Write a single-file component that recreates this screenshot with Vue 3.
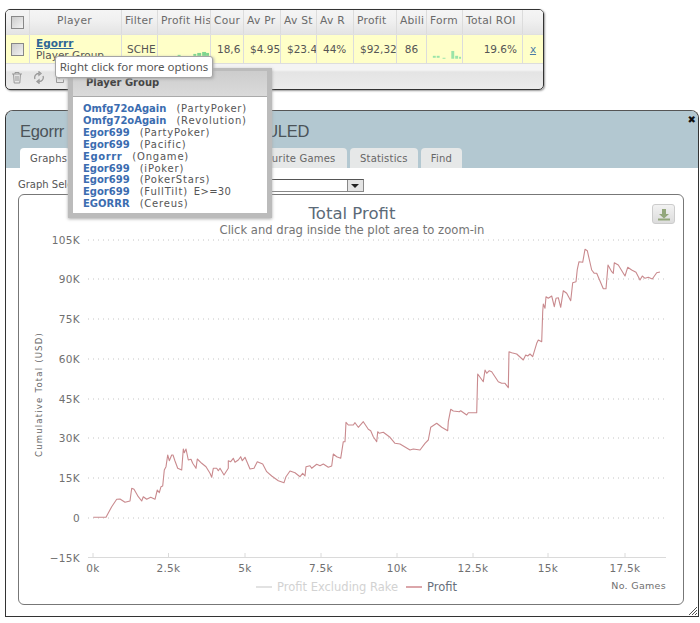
<script setup>
const columns = ['Player', 'Filter', 'Profit His', 'Cour', 'Av Pr', 'Av St', 'Av R', 'Profit', 'Abili', 'Form', 'Total ROI']
const group = [
  ['Omfg72oAgain', '(PartyPoker)', ''],
  ['Omfg72oAgain', '(Revolution)', ''],
  ['Egor699', '(PartyPoker)', ''],
  ['Egor699', '(Pacific)', ''],
  ['Egorrr', '(Ongame)', ''],
  ['Egor699', '(iPoker)', ''],
  ['Egor699', '(PokerStars)', ''],
  ['Egor699', '(FullTilt)', 'E>=30'],
  ['EGORRR', '(Cereus)', '']
]
const conv = (pts, ox, oy) => pts.map(([x, y]) => [ox + x / 3, oy + y / 3])
const a = conv([[40,352],[78,352],[95,320],[110,298],[120,297],[135,307],[150,303],[155,265],[162,268],[175,290],[185,303],[190,290],[200,298],[212,292],[225,298],[232,270],[238,278],[243,260],[248,258],[253,210],[258,200],[263,165],[268,182],[275,165],[279,165],[285,183],[293,205],[305,210],[310,147],[313,158],[318,147],[325,180],[333,178],[338,190],[348,205],[352,177],[365,190],[378,200],[390,220],[395,232],[400,205],[410,205],[415,212],[420,205],[432,225],[445,205],[445,182],[452,185],[460,175],[465,187],[475,180],[482,170],[487,182],[495,172],[505,195],[510,207],[522,205],[532,185],[548,192],[560,215],[575,228],[595,242],[612,248],[618,230],[630,213],[645,218],[660,230],[668,220],[675,228],[678,200],[690,197],[695,205],[710,193],[720,197],[730,192],[745,202],[755,198],[760,162],[770,170],[782,175],[790,125],[795,125],[798,67],[805,75],[820,75],[825,68],[835,82],[850,65],[865,88],[872,92],[880,110],[890,125],[893,95],[898,100],[910,97],[930,112],[945,130],[960,132]], 80, 400)
const b = conv([[150,330],[160,327],[180,330],[195,310],[205,300],[212,262],[230,250],[245,262],[263,272],[265,245],[272,208],[280,213],[298,215],[302,212],[320,225],[325,218],[350,218],[353,102],[370,125],[375,90],[380,100],[388,92],[395,95],[415,125],[425,130],[435,130],[445,143],[447,35],[455,38],[470,42],[490,60],[497,45],[503,48],[510,42],[518,50],[530,10],[535,0],[545,5]], 360, 340)
const c = conv([[428,245],[430,222],[435,235],[438,200],[445,205],[455,198],[463,230],[468,205],[475,203],[482,232],[490,182],[500,190],[512,212],[518,158],[528,155],[532,118],[537,95],[548,97],[555,58],[562,62],[575,120],[583,130],[590,130],[610,176],[618,176],[624,105],[635,125],[640,130],[643,98],[655,105],[675,138],[683,112],[695,120],[708,127],[720,150],[727,138],[735,145],[745,142],[757,147],[770,128],[780,126]], 400, 230)
const line = [...a.filter(p => p[0] <= 405), ...b.filter(p => p[0] > 405), ...c]
  .map(p => `${p[0].toFixed(1)},${p[1].toFixed(1)}`).join(' ')
const yTicks = [['105K',240],['90K',279],['75K',319],['60K',359],['45K',399],['30K',438],['15K',478],['0',518]]
const xTicks = [['0k',93],['2.5k',168.5],['5k',245],['7.5k',321],['10k',397],['12.5k',473],['15k',548],['17.5k',625]]
const formBars = [[432,55,3,2],[436,55,3,2],[442,57,3,1],[451,50,3,8],[455,55,3,3],[459,56,2,2]]
const historyBars = [[20,20,3,1],[36,19,3,2],[40,18,4,3],[45,17,4,4],[49,18,3,3]]
</script>

<template>
  <div class="page">
    <section class="grid-panel">
      <div class="row head">
        <div class="cell"><span class="check"></span></div>
        <div v-for="col in columns" :key="col" class="cell">{{ col }}</div>
        <div class="cell"></div>
      </div>
      <div class="row data">
        <div class="cell"><span class="check"></span></div>
        <div class="cell player"><a class="name">Egorrr</a><span>Player Group</span></div>
        <div class="cell">SCHE</div>
        <div class="cell spark">
          <svg width="53" height="29" viewBox="0 0 53 29"><g fill="#7ed68f"><rect v-for="(r, i) in historyBars" :key="i" :x="r[0]" :y="r[1]" :width="r[2]" :height="r[3]"/></g></svg>
        </div>
        <div class="cell left">18,6</div>
        <div class="cell left">$4.95</div>
        <div class="cell left">$23.4</div>
        <div class="cell left">44%</div>
        <div class="cell left">$92,32</div>
        <div class="cell">86</div>
        <div class="cell spark">
          <svg width="36" height="29" viewBox="426 34 36 29"><g fill="#9ae4a8"><rect v-for="(r, i) in formBars" :key="i" :x="r[0]" :y="r[1]" :width="r[2]" :height="r[3]"/></g></svg>
        </div>
        <div class="cell right">19.6%</div>
        <div class="cell"><a class="remove">x</a></div>
      </div>
      <div class="toolbar">
        <svg width="12" height="13" viewBox="0 0 12 13" fill="none" stroke="#999"><path d="M1 3h10M4 3V1.500h4V3M2.500 3l.7 9h5.600l.7-9M5 5v5M7 5v5"/></svg>
        <svg width="12" height="13" viewBox="0 0 12 13" fill="none" stroke="#999" stroke-width="1.300"><path d="M2 8A4 4 0 0 1 6 2.500M10 5A4 4 0 0 1 6 10.500M6 .8v3.400l2-1.700zM6 12.200V8.800l-2 1.700z"/></svg>
        <svg width="12" height="13" viewBox="0 0 12 13" fill="none" stroke="#999"><path d="M1.500 4.500v7h7v-3M4 8c0-3 2-4 5-4M8 2l3 2-3 2"/></svg>
      </div>
    </section>

    <section class="modal">
      <header class="modal-head">
        <h1 class="modal-title"><span>Egorrr</span><span>SCHEDULED</span></h1>
        <span class="close">✖</span>
        <nav class="tabs">
          <span class="tab active t-graphs">Graphs</span>
          <span class="tab t-other"></span>
          <span class="tab t-fav">Favourite Games</span>
          <span class="tab">Statistics</span>
          <span class="tab">Find</span>
        </nav>
      </header>
      <div class="modal-body">
        <div class="selector">
          <label>Graph Selection</label>
          <div class="select"><span class="arrow"></span></div>
        </div>
        <div class="chart-box">
          <svg class="chart" width="666" height="411" viewBox="18 194 666 411">
            <text x="352" y="219" class="title" text-anchor="middle">Total Profit</text>
            <text x="352" y="234" class="subtitle" text-anchor="middle">Click and drag inside the plot area to zoom-in</text>
            <line v-for="t in yTicks" :key="t[0]" x1="88" x2="666" :y1="t[1]" :y2="t[1]" class="gridline"/>
            <line x1="88" x2="666" y1="557.500" y2="557.500" class="axis"/>
            <line v-for="t in xTicks" :key="'m' + t[0]" :x1="t[1]" :x2="t[1]" y1="553" y2="558" class="axis"/>
            <text v-for="t in yTicks" :key="'l' + t[0]" x="80" :y="t[1] + 4" text-anchor="end" class="tick">{{ t[0] }}</text>
            <text x="80" y="562" text-anchor="end" class="tick">−15K</text>
            <text v-for="t in xTicks" :key="'x' + t[0]" :x="t[1]" y="572" text-anchor="middle" class="tick">{{ t[0] }}</text>
            <text transform="translate(42 394.500) rotate(-90)" text-anchor="middle" class="ytitle">Cumulative Total (USD)</text>
            <polyline :points="line" fill="none" stroke="#c98a8e" stroke-width="1.100" stroke-linejoin="round"/>
            <line x1="256" x2="272" y1="587" y2="587" stroke="#e2e2e2" stroke-width="2"/>
            <text x="277" y="591" class="legend off">Profit Excluding Rake</text>
            <line x1="406" x2="422" y1="587" y2="587" stroke="#dba6aa" stroke-width="2"/>
            <text x="427" y="591" class="legend">Profit</text>
            <text x="666" y="589" text-anchor="end" class="games">No. Games</text>
          </svg>
          <button class="download" type="button">
            <svg width="14" height="13" viewBox="0 0 14 13"><path d="M5 1h4v5h3L7 10.500 2 6h3z" fill="#93a77c"/><path d="M1 10.500h12V12.500H1z" fill="#93a77c"/></svg>
          </button>
        </div>
      </div>
      <svg class="grip" width="12" height="12" viewBox="0 0 12 12" stroke="#555"><path d="M11 3l-8 8M11 6l-5 5M11 9l-2 2"/></svg>
    </section>

    <div class="tooltip">Right click for more options</div>
    <aside class="popup">
      <h2 class="popup-head">Player Group</h2>
      <ul class="popup-list">
        <li v-for="(g, i) in group" :key="i">
          <b>{{ g[0] }}</b><span>{{ g[1] }}</span><span v-if="g[2]" class="extra">{{ g[2] }}</span>
        </li>
      </ul>
    </aside>
  </div>
</template>

<style scoped>
.page {
  position: relative;
  width: 700px;
  height: 623px;
  box-sizing: border-box;
  padding: 9px 0 0 5px;
  overflow: hidden;
  background: #fff;
  font-family: "DejaVu Sans", sans-serif;
  font-size: 10.500px;
  color: #555;
}
.grid-panel {
  width: 539px;
  height: 81px;
  box-sizing: border-box;
  border: 1px solid #333;
  border-radius: 5px;
  box-shadow: 1px 1px 2px #999;
  overflow: hidden;
  background: linear-gradient(#f4f4f4 0, #f4f4f4 60px, #e4e4e4 62px, #ececec 80px);
}
.row {
  display: grid;
  grid-template-columns: 24px 92px 36px 53px 33px 37px 36px 37px 43px 30px 36px 60px 20px;
}
.head {
  height: 25px;
  background: linear-gradient(#f5f5f5, #f0f0f0 45%, #e4e4e4);
  border-bottom: 1px solid #e0e0e0;
  box-sizing: border-box;
  color: #6a6a6a;
  font-size: 10.700px;
  letter-spacing: 0.250px;
}
.data {
  height: 29px;
  background: #ffffc8;
  border-bottom: 1px solid #ddd;
  box-sizing: border-box;
}
.cell {
  display: flex;
  align-items: center;
  justify-content: center;
  white-space: nowrap;
  overflow: hidden;
  border-right: 1px solid #dcdcdc;
  box-sizing: border-box;
  padding: 0 3px;
}
.cell:last-child { border-right: 0; }
.cell.left { justify-content: flex-start; }
.cell.right { justify-content: flex-end; padding-right: 5px; }
.cell.spark { padding: 0; align-items: flex-start; justify-content: flex-start; }
.head .cell { justify-content: center; padding-bottom: 4px; }
.head .cell:first-child { padding-bottom: 0; }
.head .cell:nth-child(n + 3) { justify-content: flex-start; }
.head .cell:nth-child(2) { padding-right: 5px; }
.data .cell:nth-child(3) { justify-content: flex-start; padding-left: 5px; }
.data .cell.left { padding-left: 6px; }
.check {
  width: 11px;
  height: 11px;
  flex: none;
  border: 1px solid #888;
  background: linear-gradient(135deg, #ccc, #f2f2f2);
}
.player {
  flex-direction: column;
  align-items: flex-start;
  justify-content: center;
  padding-left: 6px;
  line-height: 12px;
}
.name {
  color: #2f6796;
  font-weight: 700;
  text-decoration: underline;
}
.remove { color: #4a7ba6; text-decoration: underline; }
.toolbar {
  height: 25px;
  display: flex;
  align-items: center;
  gap: 10px;
  padding: 2px 0 0 5px;
  box-sizing: border-box;
}
.modal {
  position: relative;
  width: 694px;
  height: 507px;
  margin-top: 20px;
  box-sizing: border-box;
  border: 1px solid #333;
  border-top-color: #555;
  border-radius: 8px 8px 0 0;
  overflow: hidden;
  background: #fff;
}
.modal-head {
  position: relative;
  height: 57px;
  background: #b3c8d1;
}
.modal-title {
  margin: 0;
  padding: 11px 0 0 14px;
  display: flex;
  justify-content: space-between;
  width: 289px;
  font: 400 16.500px "Liberation Sans", sans-serif;
  letter-spacing: -0.300px;
  color: #4b5358;
}
.close {
  position: absolute;
  top: 3px;
  right: 2px;
  font-size: 10px;
  color: #111;
}
.tabs {
  position: absolute;
  left: 14px;
  bottom: 0;
  display: flex;
  gap: 3px;
}
.tab {
  height: 20px;
  box-sizing: border-box;
  padding: 5px 10px 0;
  border-radius: 4px 4px 0 0;
  background: #e6e8e8;
  white-space: nowrap;
  font-size: 10px;
  letter-spacing: 0.200px;
  color: #666;
}
.tab.active { background: #fff; color: #555; }
.t-graphs { width: 50px; }
.t-other { width: 162px; }
.t-fav { width: 109px; }
.modal-body { padding: 11px 0 0 12px; }
.selector {
  height: 15px;
  display: flex;
  justify-content: space-between;
  width: 346px;
  font-size: 10px;
}
.select {
  width: 100px;
  height: 13px;
  box-sizing: border-box;
  border: 1px solid #888;
  border-top-color: #555;
  display: flex;
  justify-content: flex-end;
}
.arrow {
  width: 15px;
  background: #e4e4e4;
  border-left: 1px solid #888;
  position: relative;
}
.arrow::after {
  content: "";
  position: absolute;
  left: 3px;
  top: 4px;
  border: 4px solid transparent;
  border-top: 4px solid #222;
  border-bottom: 0;
}
.chart-box {
  position: relative;
  width: 666px;
  height: 411px;
  box-sizing: border-box;
  border: 1px solid #777;
  border-radius: 6px;
  overflow: hidden;
}
.chart { display: block; margin: -1px; }
.title { font-size: 16.500px; fill: #5b6a78; }
.subtitle { font-size: 11.600px; fill: #747474; }
.gridline { stroke: #c4c4c4; stroke-dasharray: 1 4; }
.axis { stroke: #dadada; }
.tick { font-size: 10.500px; fill: #707070; letter-spacing: 0.300px; }
.ytitle { font-size: 8.500px; fill: #666; letter-spacing: 1.200px; }
.legend { font-size: 11.500px; fill: #68707c; }
.legend.off { fill: #d2d2d2; }
.games { font-size: 9.500px; fill: #707070; letter-spacing: 0.300px; }
.download {
  position: absolute;
  top: 9px;
  right: 8px;
  width: 23px;
  height: 20px;
  padding: 0;
  display: flex;
  align-items: center;
  justify-content: center;
  background: linear-gradient(#f2f2f2, #dcdcdc);
  border: 1px solid #ccc;
  border-radius: 3px;
}
.grip { position: absolute; right: 0; bottom: 0; }
.tooltip {
  position: absolute;
  left: 55px;
  top: 56px;
  width: 158px;
  height: 22px;
  z-index: 3;
  box-sizing: border-box;
  background: #fff;
  border: 1px solid #a5a5a5;
  border-radius: 3px;
  box-shadow: 1px 1px 3px #aaa;
  text-align: center;
  font: 11.500px/20px "Noto Sans", sans-serif;
  color: #555;
  white-space: nowrap;
}
.popup {
  position: absolute;
  left: 68px;
  top: 68px;
  width: 204px;
  height: 150px;
  z-index: 2;
  box-sizing: border-box;
  border: 5px solid #bbb;
  border-top-width: 3px;
  background: #fff;
  box-shadow: 0 1px 3px #aaa;
}
.popup-head {
  margin: 0;
  height: 26px;
  box-sizing: border-box;
  padding: 6px 0 0 13px;
  background: linear-gradient(#cdcdcd, #dadada);
  border-bottom: 1px solid #aaa;
  font-size: 10px;
  font-weight: 700;
  color: #444;
}
.popup-list {
  margin: 0;
  padding: 6px 0 0 10px;
  list-style: none;
  font-size: 10px;
  line-height: 11.900px;
  letter-spacing: 0.800px;
  color: #555;
}
.popup-list li { white-space: nowrap; display: flex; gap: 10px; }
.popup-list b { color: #3b6cb0; letter-spacing: 0; }
.popup-list li:nth-child(5) b { letter-spacing: 0.600px; }
.popup-list .extra { margin-left: -4px; letter-spacing: 0.300px; }
</style>
